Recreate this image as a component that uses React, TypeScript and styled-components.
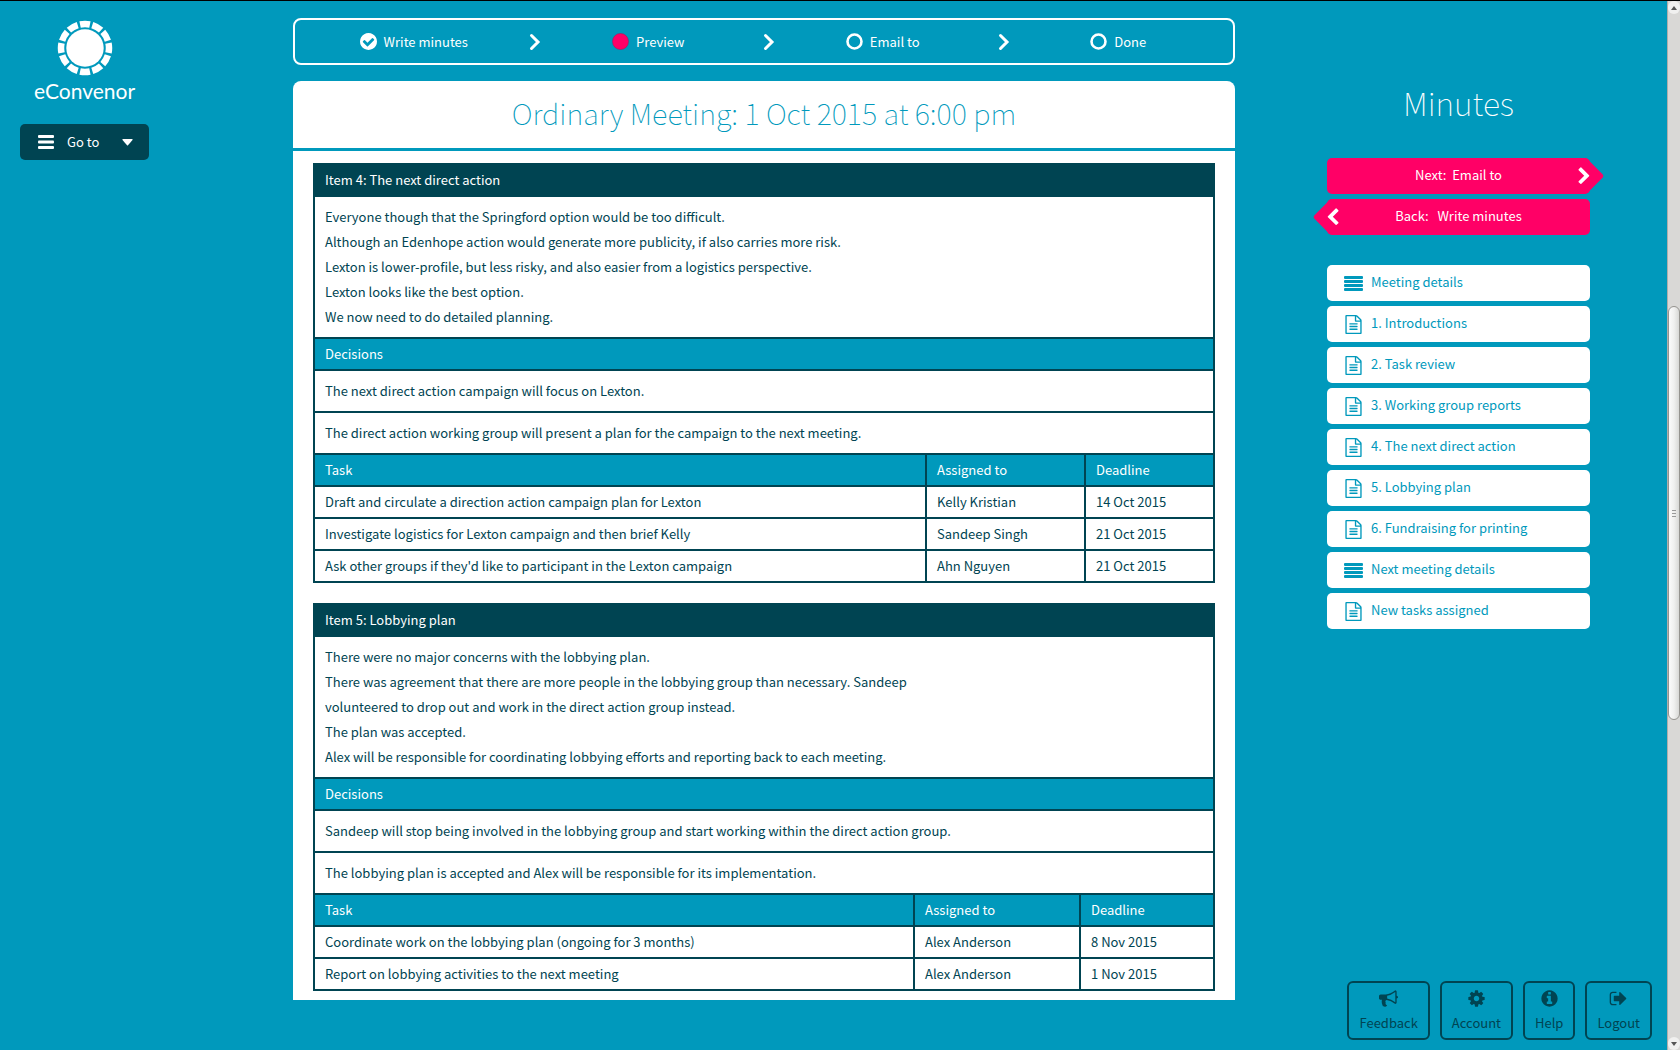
import React from "react";
import styled, { createGlobalStyle } from "styled-components";

const teal = "#0099bc";
const dark = "#004452";
const pink = "#ff0066";

const GlobalStyle = createGlobalStyle`
  *, *::before, *::after { box-sizing: border-box; }
  body {
    margin: 0;
    background: ${teal};
    color: ${dark};
    font-family: "Noto Sans CJK SC", "Noto Sans", sans-serif;
    font-size: 13px;
    line-height: 20px;
  }
`;

const Window = styled.div`
  display: grid;
  grid-template-columns: 293px minmax(0, 1fr) 432px 13px;
  grid-template-rows: minmax(0, 1fr);
  height: 100vh;
  overflow: hidden;
  border-top: 1px solid #000;
`;

/* Left column */

const LeftColumn = styled.div`
  display: flex;
  flex-direction: column;
  align-items: flex-start;
  padding: 19px 20px;
`;

const Brand = styled.a`
  display: flex;
  flex-direction: column;
  align-items: center;
  width: 129px;
  color: #fff;
  font-family: Lato, sans-serif;
  font-size: 21px;
  font-weight: 400;
  line-height: 30px;
  text-decoration: none;
`;

const GoTo = styled.button`
  display: flex;
  align-items: center;
  width: 129px;
  height: 36px;
  margin-top: 18px;
  padding: 0 16px 0 18px;
  border: 0;
  border-radius: 5px;
  background: ${dark};
  color: #fff;
  font: inherit;
`;

const GoToLabel = styled.span`
  flex: 1;
  padding-left: 13px;
  text-align: left;
`;

/* Centre column */

const Main = styled.main`
  display: flex;
  flex-direction: column;
  gap: 16px;
  min-width: 0;
  padding: 17px 0 50px;
`;

const Stepper = styled.ol`
  display: grid;
  grid-template-columns: repeat(4, 1fr);
  flex: none;
  height: 47px;
  margin: 0;
  padding: 0;
  border: 2px solid #fff;
  border-radius: 8px;
  color: #fff;
  list-style: none;
`;

const Step = styled.li`
  display: flex;
  align-items: center;
  padding-left: 5px;
`;

const StepLabel = styled.span`
  display: flex;
  flex: 1;
  align-items: center;
  justify-content: center;
  gap: 7px;
`;

const StepArrow = styled.svg`
  flex: none;
  margin-right: -12px;
`;

const Card = styled.section`
  flex: 1;
  min-height: 0;
  overflow: hidden;
  border-radius: 8px 8px 0 0;
  background: #fff;
`;

const CardTitle = styled.h1`
  margin: 0;
  padding: 11px 0 16px;
  border-bottom: 3px solid ${teal};
  color: ${teal};
  font-size: 29px;
  font-weight: 100;
  line-height: 40px;
  text-align: center;
`;

const Items = styled.div`
  display: flex;
  flex-direction: column;
  gap: 20px;
  padding: 12px 20px 9px;
`;

const ItemTable = styled.table`
  width: 100%;
  border-collapse: collapse;
  table-layout: fixed;
`;

const Column = styled.col<{ $width?: number }>`
  width: ${(p) => (p.$width ? `${p.$width}px` : "auto")};
`;

const Heading = styled.th<{ $tone: string }>`
  padding: 5px 10px;
  border: 2px solid ${dark};
  background: ${(p) => p.$tone};
  color: #fff;
  font-weight: 400;
  text-align: left;
`;

const Cell = styled.td<{ $pad: number }>`
  padding: ${(p) => p.$pad}px 10px;
  border: 2px solid ${dark};
`;

const Notes = styled.td`
  padding: 7px 10px 8px;
  border: 2px solid ${dark};
  line-height: 25px;
`;

/* Right column */

const RightColumn = styled.aside`
  display: flex;
  flex-direction: column;
  justify-content: space-between;
  padding: 78px 15px 10px 92px;
`;

const PageTitle = styled.h2`
  margin: 0 0 28px;
  color: #fff;
  font-size: 32px;
  font-weight: 100;
  line-height: 46px;
  text-align: center;
`;

const SideMenu = styled.nav`
  display: flex;
  flex-direction: column;
  gap: 5px;
  width: 263px;
`;

const Move = styled.button<{ $back?: boolean }>`
  position: relative;
  display: flex;
  flex-direction: ${(p) => (p.$back ? "row-reverse" : "row")};
  align-items: center;
  height: 36px;
  padding: 0;
  border: 0;
  border-radius: 5px;
  background: ${pink};
  color: #fff;
  font: inherit;

  &::before {
    content: "";
    position: absolute;
    top: 5px;
    ${(p) => (p.$back ? "left: -9px" : "right: -9px")};
    width: 26px;
    height: 26px;
    border-radius: 3px;
    background: ${pink};
    transform: rotate(45deg);
  }
`;

const MoveLabel = styled.span`
  flex: 1;
  padding-bottom: 2px;
  text-align: center;
  white-space: pre;
`;

const MoveArrow = styled.svg<{ $back?: boolean }>`
  position: relative;
  flex: none;
  margin: ${(p) => (p.$back ? "0 -12px 0 0" : "0 0 0 -12px")};
`;

const Links = styled.ul`
  display: flex;
  flex-direction: column;
  gap: 5px;
  margin: 25px 0 0;
  padding: 0;
  list-style: none;
`;

const SideLink = styled.a`
  display: grid;
  grid-template-columns: 19px 1fr;
  align-items: center;
  gap: 8px;
  height: 36px;
  padding-left: 17px;
  border-radius: 5px;
  background: #fff;
  color: ${teal};
  text-decoration: none;
`;

const LinkLabel = styled.span`
  padding-bottom: 2px;
`;

const Tools = styled.div`
  display: flex;
  justify-content: flex-end;
  gap: 10px;
`;

const Tool = styled.button`
  display: flex;
  flex-direction: column;
  align-items: center;
  gap: 5px;
  height: 59px;
  padding: 6px 10px 0;
  border: 2px solid ${dark};
  border-radius: 6px;
  background: transparent;
  color: ${dark};
  font: inherit;
`;

/* Scroll bar */

const ScrollBar = styled.div`
  display: grid;
  grid-template-rows: 13px 292fr 414fr 317fr 13px;
  border-left: 1px solid #b0aeab;
  background: #d9d8d6;
`;

const ScrollEnd = styled.span`
  display: grid;
  place-items: center;
  border-radius: 6px;
  background: #f0f0ef;
  color: #555;
`;

const LastScrollEnd = styled(ScrollEnd)`
  grid-row: 5;
`;

const Thumb = styled.span`
  display: grid;
  grid-row: 3;
  place-content: center;
  gap: 2px;
  border: 1px solid #95938f;
  border-radius: 6px;
  background: linear-gradient(90deg, #fbfbfb, #f0f0ef 50%, #d8d8d6);

  i {
    width: 4px;
    height: 1px;
    background: #999;
  }
`;

const disc =
  "M1664 896q0 209-103 385.500t-279.500 279.500-385.500 103-385.500-103-279.500-279.500-103-385.500 103-385.500 279.500-279.500 385.500-103 385.500 103 279.500 279.500 103 385.500z";

const glyphs = {
  check:
    "M1412 734q0-28-18-46l-91-90q-19-19-45-19t-45 19l-408 407-226-226q-19-19-45-19t-45 19l-91 90q-18 18-18 46 0 27 18 45l362 362q19 19 45 19 27 0 46-19l543-543q18-18 18-45z" +
    disc,
  info:
    "M1152 1376v-160q0-14-9-23t-23-9h-96v-512q0-14-9-23t-23-9h-320q-14 0-23 9t-9 23v160q0 14 9 23t23 9h96v320h-96q-14 0-23 9t-9 23v160q0 14 9 23t23 9h448q14 0 23-9t9-23zM1024 480v-160q0-14-9-23t-23-9h-192q-14 0-23 9t-9 23v160q0 14 9 23t23 9h192q14 0 23-9t9-23z" +
    disc,
  file: "M1596 380q28 28 48 76t20 88v1152q0 40-28 68t-68 28h-1344q-40 0-68-28t-28-68v-1600q0-40 28-68t68-28h896q40 0 88 20t76 48zm-444-244v376h376q-10-29-22-41l-313-313q-12-12-41-22zm384 1528v-1024h-416q-40 0-68-28t-28-68v-416h-768v1536h1280zM512 800q0-14 9-23t23-9h704q14 0 23 9t9 23v64q0 14-9 23t-23 9h-704q-14 0-23-9t-9-23v-64zm736 224q14 0 23 9t9 23v64q0 14-9 23t-23 9h-704q-14 0-23-9t-9-23v-64q0-14 9-23t23-9h704zm0 256q14 0 23 9t9 23v64q0 14-9 23t-23 9h-704q-14 0-23-9t-9-23v-64q0-14 9-23t23-9h704z",
  cog: "M1152 896q0-106-75-181t-181-75-181 75-75 181 75 181 181 75 181-75 75-181zm512-109v222q0 12-8 23t-20 13l-185 28q-19 54-39 91 35 50 107 138 10 12 10 25t-9 23q-27 37-99 108t-94 71q-12 0-26-9l-138-108q-44 23-91 38-16 136-29 186-7 28-36 28h-222q-14 0-24.500-8.500t-11.500-21.500l-28-184q-49-16-90-37l-141 107q-10 9-25 9-14 0-25-11-126-114-165-168-7-10-7-23 0-12 8-23 15-21 51-66.500t54-70.500q-27-50-41-99l-183-27q-13-2-21-12.500t-8-23.500v-222q0-12 8-23t19-13l186-28q14-46 39-92-40-57-107-138-10-12-10-24 0-10 9-23 26-36 98.500-107.500t94.500-71.500q13 0 26 10l138 107q44-23 91-38 16-136 29-186 7-28 36-28h222q14 0 24.500 8.500t11.500 21.500l28 184q49 16 90 37l142-107q9-9 24-9 13 0 25 10 129 119 165 170 7 8 7 22 0 12-8 23-15 21-51 66.500t-54 70.500q26 50 41 98l183 28q13 2 21 12.500t8 23.500z",
  out: "M704 1440q0 4 1 20t.5 26.500-3 23.500-10 19.500-20.500 6.500h-320q-119 0-203.500-84.500t-84.500-203.500v-704q0-119 84.500-203.500t203.500-84.500h320q13 0 22.500 9.500t9.500 22.500q0 4 1 20t.5 26.500-3 23.500-10 19.500-20.500 6.500h-320q-66 0-113 47t-47 113v704q0 66 47 113t113 47h312l11.500 1 11.500 3 8 5.500 7 9 2 13.500zm928-544q0 26-19 45l-544 544q-19 19-45 19t-45-19-19-45v-288h-448q-26 0-45-19t-19-45v-384q0-26 19-45t45-19h448v-288q0-26 19-45t45-19 45 19l544 544q19 19 19 45z",
  horn: "M1664 640q53 0 90.500 37.500t37.500 90.500-37.500 90.500-90.500 37.500v384q0 52-38 90t-90 38q-417-347-812-380-58 19-91 66t-31 100.500 40 92.500q-20 33-23 65.500t6 58 33.500 55 48 50 61.500 50.500q-29 58-111.500 83t-168.500 11.500-132-55.500q-7-23-29.500-87.500t-32-94.500-23-89-15-101 3.500-98.500 22-110.500h-122q-66 0-113-47t-47-113v-192q0-66 47-113t113-47h480q435 0 896-384 52 0 90 38t38 90v384zm-128 604v-954q-394 302-768 343v270q377 42 768 341z",
  chevron:
    "M1363 877l-742 742q-19 19-45 19t-45-19l-166-166q-19-19-19-45t19-45l531-531-531-531q-19-19-19-45t19-45l166-166q19-19 45-19t45 19l742 742q19 19 19 45t-19 45z",
};

const Glyph = ({ name, size }: { name: keyof typeof glyphs; size: number }) => (
  <svg width={size} height={size} viewBox="0 0 1792 1792" fill="currentColor" fillRule="evenodd" aria-hidden="true">
    <path d={glyphs[name]} />
  </svg>
);

const Bars = ({ width, height, count, bar }: { width: number; height: number; count: number; bar: number }) => (
  <svg width={width} height={height} fill="currentColor" aria-hidden="true">
    {Array.from({ length: count }, (_, i) => (
      <rect key={i} y={(i * (height - bar)) / (count - 1)} width={width} height={bar} rx="1" />
    ))}
  </svg>
);

const Logo = () => (
  <svg width="56" height="56" viewBox="-28 -28 56 56" aria-hidden="true">
    <circle r="18.700" fill="#fff" />
    <circle
      r="24"
      fill="none"
      stroke="#fff"
      strokeWidth="6.500"
      pathLength="120"
      strokeDasharray="8.100 1.900"
      strokeDashoffset="4.050"
    />
  </svg>
);

const StepIcon = ({ state }: { state: string }) =>
  state === "done" ? (
    <svg width="17" height="17" viewBox="128 128 1536 1536" fill="#fff" fillRule="evenodd" aria-hidden="true">
      <path d={glyphs.check} />
    </svg>
  ) : (
    <svg width="17" height="17" viewBox="0 0 17 17" aria-hidden="true">
      {state === "current" ? (
        <circle cx="8.500" cy="8.500" r="8" fill={pink} stroke="#a3195b" strokeWidth="0.600" />
      ) : (
        <circle cx="8.500" cy="8.500" r="7" fill="none" stroke="#fff" strokeWidth="2.600" />
      )}
    </svg>
  );

const steps = [
  { label: "Write minutes", state: "done" },
  { label: "Preview", state: "current" },
  { label: "Email to", state: "todo" },
  { label: "Done", state: "todo" },
];

const items = [
  {
    title: "Item 4: The next direct action",
    notes: [
      "Everyone though that the Springford option would be too difficult.",
      "Although an Edenhope action would generate more publicity, if also carries more risk.",
      "Lexton is lower-profile, but less risky, and also easier from a logistics perspective.",
      "Lexton looks like the best option.",
      "We now need to do detailed planning.",
    ],
    decisions: [
      "The next direct action campaign will focus on Lexton.",
      "The direct action working group will present a plan for the campaign to the next meeting.",
    ],
    columns: [159, 129],
    tasks: [
      ["Draft and circulate a direction action campaign plan for Lexton", "Kelly Kristian", "14 Oct 2015"],
      ["Investigate logistics for Lexton campaign and then brief Kelly", "Sandeep Singh", "21 Oct 2015"],
      ["Ask other groups if they'd like to participant in the Lexton campaign", "Ahn Nguyen", "21 Oct 2015"],
    ],
  },
  {
    title: "Item 5: Lobbying plan",
    notes: [
      "There were no major concerns with the lobbying plan.",
      "There was agreement that there are more people in the lobbying group than necessary. Sandeep",
      "volunteered to drop out and work in the direct action group instead.",
      "The plan was accepted.",
      "Alex will be responsible for coordinating lobbying efforts and reporting back to each meeting.",
    ],
    decisions: [
      "Sandeep will stop being involved in the lobbying group and start working within the direct action group.",
      "The lobbying plan is accepted and Alex will be responsible for its implementation.",
    ],
    columns: [166, 134],
    tasks: [
      ["Coordinate work on the lobbying plan (ongoing for 3 months)", "Alex Anderson", "8 Nov 2015"],
      ["Report on lobbying activities to the next meeting", "Alex Anderson", "1 Nov 2015"],
    ],
  },
];

const links = [
  "Meeting details",
  "1. Introductions",
  "2. Task review",
  "3. Working group reports",
  "4. The next direct action",
  "5. Lobbying plan",
  "6. Fundraising for printing",
  "Next meeting details",
  "New tasks assigned",
];

const tools: { label: string; icon: keyof typeof glyphs }[] = [
  { label: "Feedback", icon: "horn" },
  { label: "Account", icon: "cog" },
  { label: "Help", icon: "info" },
  { label: "Logout", icon: "out" },
];

const Item = ({ item }: { item: (typeof items)[number] }) => (
  <ItemTable>
    <colgroup>
      <Column />
      {item.columns.map((width, i) => (
        <Column key={i} $width={width} />
      ))}
    </colgroup>
    <tbody>
      <tr>
        <Heading colSpan={3} $tone={dark}>{item.title}</Heading>
      </tr>
      <tr>
        <Notes colSpan={3}>
          {item.notes.map((line) => (
            <div key={line}>{line}</div>
          ))}
        </Notes>
      </tr>
      <tr>
        <Heading colSpan={3} $tone={teal}>Decisions</Heading>
      </tr>
      {item.decisions.map((text) => (
        <tr key={text}>
          <Cell colSpan={3} $pad={10}>{text}</Cell>
        </tr>
      ))}
      <tr>
        {["Task", "Assigned to", "Deadline"].map((text) => (
          <Heading key={text} $tone={teal}>{text}</Heading>
        ))}
      </tr>
      {item.tasks.map((row) => (
        <tr key={row[0]}>
          {row.map((text) => (
            <Cell key={text} $pad={5}>{text}</Cell>
          ))}
        </tr>
      ))}
    </tbody>
  </ItemTable>
);

export default function App() {
  return (
    <>
      <GlobalStyle />
      <Window>
        <LeftColumn>
          <Brand href="#">
            <Logo />
            eConvenor
          </Brand>
          <GoTo type="button">
            <Bars width={16} height={14} count={3} bar={3} />
            <GoToLabel>Go to</GoToLabel>
            <svg width="11" height="7" fill="currentColor" aria-hidden="true">
              <path d="M1 0h9q1 0 .5 1L6 6.300q-.5.500-1 0L.5 1Q0 0 1 0z" />
            </svg>
          </GoTo>
        </LeftColumn>

        <Main>
          <Stepper>
            {steps.map((step, i) => (
              <Step key={step.label}>
                <StepLabel>
                  <StepIcon state={step.state} />
                  {step.label}
                </StepLabel>
                {i < steps.length - 1 && (
                  <StepArrow width="14" height="18" fill="none" stroke="#fff" strokeWidth="3" strokeLinecap="round" aria-hidden="true">
                    <path d="M3.500 2.500L10 9l-6.500 6.500" />
                  </StepArrow>
                )}
              </Step>
            ))}
          </Stepper>
          <Card>
            <CardTitle>Ordinary Meeting: 1 Oct 2015 at 6:00 pm</CardTitle>
            <Items>
              {items.map((item) => (
                <Item key={item.title} item={item} />
              ))}
            </Items>
          </Card>
        </Main>

        <RightColumn>
          <SideMenu>
            <PageTitle>Minutes</PageTitle>
            <Move type="button">
              <MoveLabel>{"Next:  Email to"}</MoveLabel>
              <MoveArrow width="12" height="18" viewBox="300 0 1152 1728" fill="currentColor" aria-hidden="true">
                <path d={glyphs.chevron} />
              </MoveArrow>
            </Move>
            <Move type="button" $back>
              <MoveLabel>{"Back:   Write minutes"}</MoveLabel>
              <MoveArrow $back width="12" height="18" viewBox="300 0 1152 1728" fill="currentColor" aria-hidden="true">
                <path d={glyphs.chevron} transform="translate(1752 0) scale(-1 1)" />
              </MoveArrow>
            </Move>
            <Links>
              {links.map((label) => (
                <li key={label}>
                  <SideLink href="#">
                    {label.endsWith("details") ? (
                      <Bars width={19} height={15} count={4} bar={3} />
                    ) : (
                      <Glyph name="file" size={19} />
                    )}
                    <LinkLabel>{label}</LinkLabel>
                  </SideLink>
                </li>
              ))}
            </Links>
          </SideMenu>
          <Tools>
            {tools.map((tool) => (
              <Tool key={tool.label} type="button">
                <Glyph name={tool.icon} size={19} />
                {tool.label}
              </Tool>
            ))}
          </Tools>
        </RightColumn>

        <ScrollBar aria-hidden="true">
          <ScrollEnd>
            <svg width="6" height="4" fill="currentColor"><path d="M0 4l3-4 3 4z" /></svg>
          </ScrollEnd>
          <Thumb><i /><i /><i /></Thumb>
          <LastScrollEnd>
            <svg width="6" height="4" fill="currentColor"><path d="M0 0l3 4 3-4z" /></svg>
          </LastScrollEnd>
        </ScrollBar>
      </Window>
    </>
  );
}
